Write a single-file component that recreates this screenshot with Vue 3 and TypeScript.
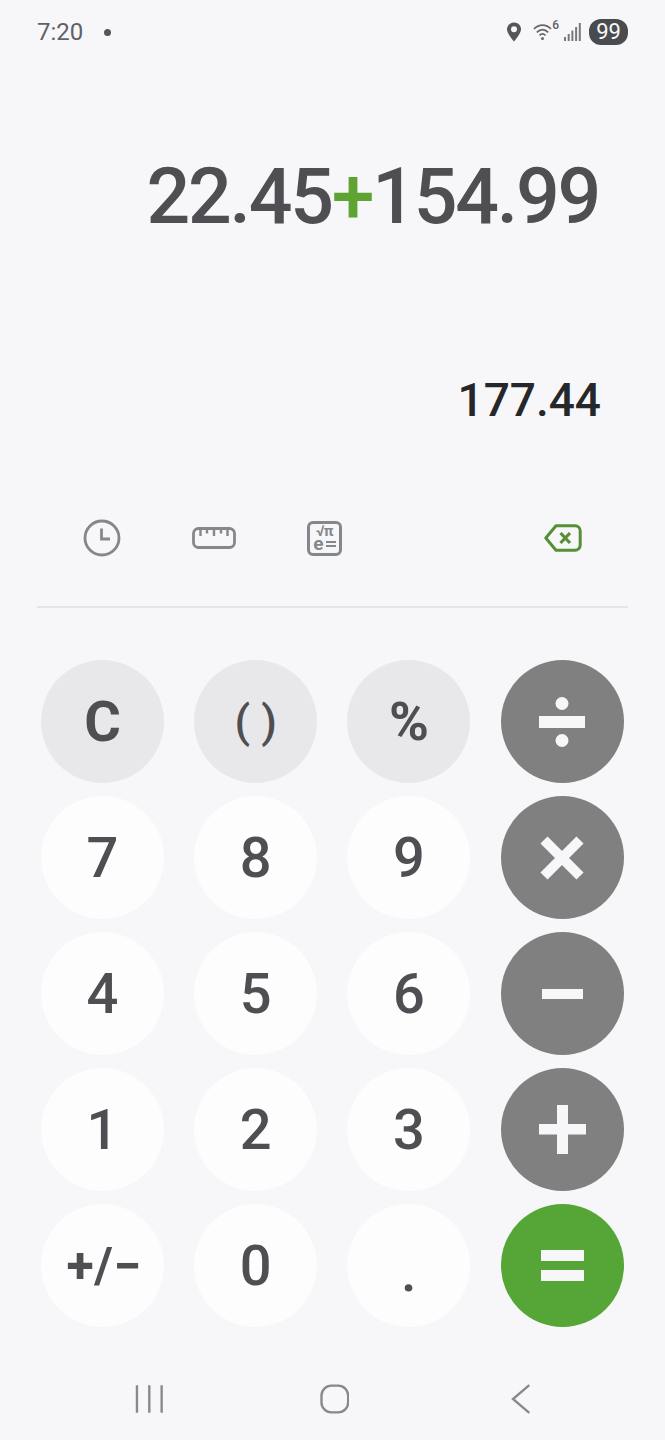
<template>
  <div class="screen">
    <div class="status-bar">
      <span class="clock">7:20</span>
      <span class="notif-dot"></span>
      <div class="status-icons">
        <svg class="pin" width="16" height="20" viewBox="0 0 16 20">
          <path d="M8 0.500C3.800 0.500 1 3.700 1 7.300 1 11.800 8 19.500 8 19.500S15 11.800 15 7.300C15 3.700 12.200 0.500 8 0.500Z" fill="#55565a" />
          <circle cx="8" cy="7.300" r="3" fill="#f7f7f9" />
        </svg>
        <span class="wifi">
          <svg width="24" height="22" viewBox="0 0 24 22" fill="none" stroke="#66676b" stroke-width="1.700">
            <path d="M1 8C6 2.800 13 2.800 18 8" />
            <path d="M3.800 11.300C7.500 7.600 11.500 7.600 15.200 11.300" />
            <path d="M6.500 14.300C8.500 12.400 10.500 12.400 12.500 14.300" />
            <circle cx="9.500" cy="17.500" r="1.500" fill="#66676b" stroke="none" />
          </svg>
          <span class="wifi-six">6</span>
        </span>
        <svg class="signal" width="17" height="20" viewBox="0 0 17 20" fill="#77787c">
          <rect x="0" y="15" width="2" height="4" />
          <rect x="3.700" y="12" width="2" height="7" />
          <rect x="7.400" y="8.500" width="2" height="10.500" />
          <rect x="11.100" y="5" width="2" height="14" />
          <rect x="14.800" y="1" width="2" height="18" />
        </svg>
        <span class="battery">99</span>
      </div>
    </div>

    <div class="expression">22.45<span class="plus">+</span>154.99</div>
    <div class="result">177.44</div>

    <div class="tools">
      <svg class="tool tool-clock" width="38" height="38" viewBox="0 0 38 38" fill="none" stroke="#86878a" stroke-width="2.800">
        <circle cx="19" cy="19" r="17" />
        <path d="M18.500 9.500V20H27" />
      </svg>
      <svg class="tool tool-ruler" width="44" height="22" viewBox="0 0 44 22" fill="none" stroke="#86878a" stroke-width="2.800">
        <rect x="1.500" y="1.500" width="41" height="19" rx="5" />
        <path d="M8.500 2V9M15 2V6.500M22 2V9M29 2V6.500M35.500 2V9" stroke-width="2.400" />
      </svg>
      <span class="tool tool-sci">
        <span class="sci-top">√π</span>
        <span class="sci-bottom">e<span class="sci-eq"></span></span>
      </span>
      <svg class="tool tool-back" width="38" height="28" viewBox="0 0 38 28" fill="none" stroke="#568f36" stroke-width="3" stroke-linejoin="round">
        <path d="M12 1.800H31C34 1.800 36.200 4 36.200 7V21C36.200 24 34 26.200 31 26.200H12L1.800 14Z" />
        <path d="M16.500 9L26 19M26 9L16.500 19" stroke-width="3.200" />
      </svg>
    </div>

    <div class="divider"></div>

    <div class="keypad">
      <button v-for="k in keys" :key="k.id" class="key" :class="k.kind">
        <svg v-if="k.id === 'div'" width="48" height="50" viewBox="0 0 48 50" fill="#f7f7f9">
          <circle cx="24" cy="6.500" r="6.500" />
          <rect x="1" y="19" width="46" height="12" />
          <circle cx="24" cy="43.500" r="6.500" />
        </svg>
        <svg v-else-if="k.id === 'mul'" width="44" height="44" viewBox="0 0 44 44" fill="none" stroke="#f7f7f9" stroke-width="10">
          <path d="M4 4L40 40M40 4L4 40" />
        </svg>
        <svg v-else-if="k.id === 'sub'" width="41" height="10" viewBox="0 0 41 10" fill="#f7f7f9">
          <rect width="41" height="10" />
        </svg>
        <svg v-else-if="k.id === 'add'" width="47" height="49" viewBox="0 0 47 49" fill="#f7f7f9">
          <rect x="0" y="19" width="47" height="10.500" />
          <rect x="18" y="0" width="11" height="49" />
        </svg>
        <svg v-else-if="k.id === 'eq'" width="43" height="31" viewBox="0 0 43 31" fill="#f7f7f9">
          <rect width="43" height="11" />
          <rect y="20" width="43" height="11" />
        </svg>
        <span v-else :class="k.extra">{{ k.label }}</span>
      </button>
    </div>

    <div class="nav">
      <svg width="30" height="28" viewBox="0 0 30 28" fill="none" stroke="#88898c" stroke-width="2.400">
        <path d="M3 0V28M15.500 0V28M28 0V28" />
      </svg>
      <svg class="nav-home" width="30" height="30" viewBox="0 0 30 30" fill="none" stroke="#88898c" stroke-width="2.400">
        <rect x="1.500" y="1.500" width="27" height="27" rx="10" />
      </svg>
      <svg class="nav-back" width="20" height="30" viewBox="0 0 20 30" fill="none" stroke="#88898c" stroke-width="2.400">
        <path d="M18.500 1L2 15 18.500 29" />
      </svg>
    </div>
  </div>
</template>

<script setup lang="ts">
interface Key {
  id: string
  label: string
  kind: 'light' | 'plain' | 'op' | 'equals'
  extra?: string
}

const keys: Key[] = [
  { id: 'c', label: 'C', kind: 'light', extra: 'clear' },
  { id: 'paren', label: '( )', kind: 'light', extra: 'paren' },
  { id: 'pct', label: '%', kind: 'light', extra: 'pct' },
  { id: 'div', label: '', kind: 'op' },
  { id: '7', label: '7', kind: 'plain' },
  { id: '8', label: '8', kind: 'plain' },
  { id: '9', label: '9', kind: 'plain' },
  { id: 'mul', label: '', kind: 'op' },
  { id: '4', label: '4', kind: 'plain' },
  { id: '5', label: '5', kind: 'plain' },
  { id: '6', label: '6', kind: 'plain' },
  { id: 'sub', label: '', kind: 'op' },
  { id: '1', label: '1', kind: 'plain' },
  { id: '2', label: '2', kind: 'plain' },
  { id: '3', label: '3', kind: 'plain' },
  { id: 'add', label: '', kind: 'op' },
  { id: 'sign', label: '+/−', kind: 'plain', extra: 'sign' },
  { id: '0', label: '0', kind: 'plain' },
  { id: 'dot', label: '.', kind: 'plain', extra: 'dot' },
  { id: 'eq', label: '', kind: 'equals' }
]
</script>

<style>
html,
body {
  margin: 0;
  background: #f7f7f9;
}
</style>

<style scoped>
.screen {
  width: 665px;
  height: 1440px;
  background: #f7f7f9;
  font-family: Roboto, "Liberation Sans", sans-serif;
  overflow: hidden;
  display: flex;
  flex-direction: column;
}

.status-bar {
  height: 64px;
  flex-shrink: 0;
  display: flex;
  align-items: center;
  padding: 0 37px;
  color: #606165;
}

.clock {
  font-size: 24px;
}

.notif-dot {
  width: 7px;
  height: 7px;
  margin-left: 21px;
  border-radius: 50%;
  background: #55565a;
}

.status-icons {
  margin-left: auto;
  display: flex;
  align-items: center;
}

.pin {
  margin-right: 11px;
}

.wifi {
  position: relative;
  width: 26px;
  height: 22px;
}

.wifi-six {
  position: absolute;
  top: -3px;
  right: 0;
  font-size: 12px;
  font-weight: 500;
}

.signal {
  margin: 0 8px 0 5px;
}

.battery {
  width: 39px;
  height: 26px;
  border-radius: 12px;
  background: #4a4b4f;
  color: #f7f7f9;
  font-size: 22px;
  line-height: 26px;
  text-align: center;
}

.expression {
  margin-top: 88px;
  padding-right: 66px;
  height: 90px;
  text-align: right;
  font-size: 77px;
  font-weight: 500;
  line-height: 90px;
  color: #4f4f53;
  letter-spacing: -2.250px;
}

.plus {
  color: #5fa433;
}

.result {
  margin-top: 130px;
  padding-right: 64px;
  height: 56px;
  text-align: right;
  font-size: 46px;
  font-weight: 500;
  line-height: 56px;
  color: #26272a;
}

.tools {
  margin-top: 88px;
  height: 44px;
  padding: 0 83px;
  display: flex;
  align-items: center;
}

.tool-ruler {
  margin-left: 71px;
}

.tool-sci {
  box-sizing: border-box;
  width: 35px;
  height: 35px;
  margin-left: 71px;
  border: 3px solid #86878a;
  border-radius: 6px;
  color: #86878a;
  font-weight: 700;
  display: flex;
  flex-direction: column;
  align-items: center;
  line-height: 1;
}

.sci-top {
  font-size: 15px;
  height: 13px;
  letter-spacing: -0.500px;
}

.sci-bottom {
  font-size: 19px;
  height: 14px;
  line-height: 13px;
  display: flex;
  align-items: center;
  gap: 2px;
}

.sci-eq {
  width: 10px;
  height: 2px;
  border-top: 2px solid #86878a;
  border-bottom: 2px solid #86878a;
}

.tool-back {
  margin-left: auto;
}

.divider {
  margin: 46px 37px 0;
  height: 2px;
  background: #e5e5e7;
  flex-shrink: 0;
}

.keypad {
  margin-top: 52px;
  padding: 0 41px;
  display: grid;
  grid-template-columns: repeat(4, 123px);
  grid-auto-rows: 123px;
  column-gap: 30.200px;
  row-gap: 13px;
}

.key {
  border: 0;
  padding: 0;
  border-radius: 50%;
  font-family: inherit;
  font-size: 56px;
  font-weight: 500;
  color: #4f4f53;
  display: flex;
  align-items: center;
  justify-content: center;
}

.light {
  background: #e8e8ea;
}

.plain {
  background: #fdfdfe;
}

.op {
  background: #808080;
}

.equals {
  background: #55a636;
}

.clear {
  font-weight: 700;
}

.paren {
  font-size: 45px;
  font-weight: 500;
}

.pct {
  font-size: 54px;
  font-weight: 700;
}

.sign {
  font-size: 50px;
  font-weight: 700;
  letter-spacing: 0.500px;
  padding-left: 3px;
}

.dot {
  font-size: 56px;
  position: relative;
  top: 6px;
}

.nav {
  margin-top: 57px;
  padding: 0 134px;
  display: flex;
  align-items: center;
}

.nav-home {
  margin-left: 156px;
}

.nav-back {
  margin-left: 162px;
}
</style>
